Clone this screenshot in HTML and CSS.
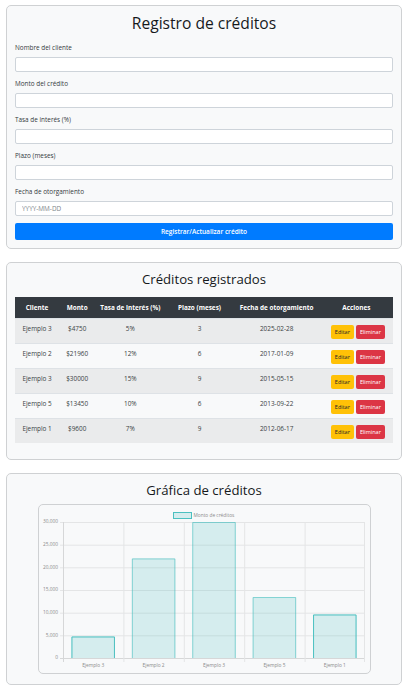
FILE: index.html
```html
<!DOCTYPE html>
<html lang="es">
<head>
<meta charset="utf-8">
<title>Registro de créditos</title>
<link rel="stylesheet" href="styles.css">
</head>
<body>
<main class="page">
  <section class="card">
    <h1 class="title title-lg">Registro de créditos</h1>
    <form class="form">
      <div class="field"><label class="label">Nombre del cliente</label><input class="input" type="text"></div>
      <div class="field"><label class="label">Monto del crédito</label><input class="input" type="text"></div>
      <div class="field"><label class="label">Tasa de interés (%)</label><input class="input" type="text"></div>
      <div class="field"><label class="label">Plazo (meses)</label><input class="input" type="text"></div>
      <div class="field"><label class="label">Fecha de otorgamiento</label><input class="input" type="text" placeholder="YYYY-MM-DD"></div>
      <button class="btn-primary" type="button">Registrar/Actualizar crédito</button>
    </form>
  </section>

  <section class="card">
    <h2 class="title title-md title-table">Créditos registrados</h2>
    <table class="table">
      <colgroup>
        <col class="c1"><col class="c2"><col class="c3"><col class="c4"><col class="c5"><col class="c6">
      </colgroup>
      <thead>
        <tr><th>Cliente</th><th>Monto</th><th>Tasa de interés (%)</th><th>Plazo (meses)</th><th>Fecha de otorgamiento</th><th>Acciones</th></tr>
      </thead>
      <tbody>
        <tr><td>Ejemplo 3</td><td>$4750</td><td>5%</td><td>3</td><td>2025-02-28</td><td><div class="actions"><button class="btn-sm btn-edit">Editar</button><button class="btn-sm btn-del">Eliminar</button></div></td></tr>
        <tr><td>Ejemplo 2</td><td>$21960</td><td>12%</td><td>6</td><td>2017-01-09</td><td><div class="actions"><button class="btn-sm btn-edit">Editar</button><button class="btn-sm btn-del">Eliminar</button></div></td></tr>
        <tr><td>Ejemplo 3</td><td>$30000</td><td>15%</td><td>9</td><td>2015-05-15</td><td><div class="actions"><button class="btn-sm btn-edit">Editar</button><button class="btn-sm btn-del">Eliminar</button></div></td></tr>
        <tr><td>Ejemplo 5</td><td>$13450</td><td>10%</td><td>6</td><td>2013-09-22</td><td><div class="actions"><button class="btn-sm btn-edit">Editar</button><button class="btn-sm btn-del">Eliminar</button></div></td></tr>
        <tr><td>Ejemplo 1</td><td>$9600</td><td>7%</td><td>9</td><td>2012-06-17</td><td><div class="actions"><button class="btn-sm btn-edit">Editar</button><button class="btn-sm btn-del">Eliminar</button></div></td></tr>
      </tbody>
    </table>
  </section>

  <section class="card">
    <h2 class="title title-md title-chart">Gráfica de créditos</h2>
    <div class="chart-box">
      <svg class="chart" width="331" height="168" viewBox="0 0 331 168" xmlns="http://www.w3.org/2000/svg">
        <g class="grid" stroke="#e4e5e6" stroke-width="1">
          <line x1="21" y1="17.5" x2="326" y2="17.5"/>
          <line x1="21" y1="40.2" x2="326" y2="40.2"/>
          <line x1="21" y1="62.8" x2="326" y2="62.8"/>
          <line x1="21" y1="85.5" x2="326" y2="85.5"/>
          <line x1="21" y1="108.2" x2="326" y2="108.2"/>
          <line x1="21" y1="130.8" x2="326" y2="130.8"/>
          <line x1="21" y1="153.5" x2="326" y2="153.5" stroke="#d6d7d8"/>
          <line x1="24.5" y1="17" x2="24.5" y2="157" stroke="#d6d7d8"/>
          <line x1="84.9" y1="17" x2="84.9" y2="157"/>
          <line x1="145.3" y1="17" x2="145.3" y2="157"/>
          <line x1="205.7" y1="17" x2="205.7" y2="157"/>
          <line x1="266.1" y1="17" x2="266.1" y2="157"/>
          <line x1="325.5" y1="17" x2="325.5" y2="157"/>
        </g>
        <g class="bars" fill="rgba(75,192,192,0.2)" stroke="rgb(75,192,192)" stroke-width="1">
          <rect x="32.45" y="131.47" width="43.5" height="21.53" stroke="none"/>
          <path d="M32.95 153 V131.97 H75.45 V153" fill="none"/>
          <rect x="92.85" y="53.45" width="43.5" height="99.55" stroke="none"/>
          <path d="M93.35 153 V53.95 H135.85 V153" fill="none" stroke-opacity="0.6"/>
          <rect x="153.25" y="17" width="43.5" height="136" stroke="none"/>
          <path d="M153.75 153 V17.5 H196.25 V153" fill="none" stroke-opacity="0.6"/>
          <rect x="213.65" y="92.03" width="43.5" height="60.97" stroke="none"/>
          <path d="M214.15 153 V92.53 H256.65 V153" fill="none" stroke-opacity="0.6"/>
          <rect x="274.05" y="109.48" width="43.5" height="43.52" stroke="none"/>
          <path d="M274.55 153 V109.98 H317.05 V153" fill="none"/>
        </g>
        <g class="axis-text" fill="#8a8a8a" font-size="4.8" font-family="Open Sans, sans-serif">
          <text x="19" y="17" text-anchor="end" dominant-baseline="middle">30,000</text>
          <text x="19" y="39.7" text-anchor="end" dominant-baseline="middle">25,000</text>
          <text x="19" y="62.3" text-anchor="end" dominant-baseline="middle">20,000</text>
          <text x="19" y="85" text-anchor="end" dominant-baseline="middle">15,000</text>
          <text x="19" y="107.7" text-anchor="end" dominant-baseline="middle">10,000</text>
          <text x="19" y="130.3" text-anchor="end" dominant-baseline="middle">5,000</text>
          <text x="19" y="153" text-anchor="end" dominant-baseline="middle">0</text>
          <text x="54.2" y="161" text-anchor="middle" dominant-baseline="middle">Ejemplo 3</text>
          <text x="114.6" y="161" text-anchor="middle" dominant-baseline="middle">Ejemplo 2</text>
          <text x="175" y="161" text-anchor="middle" dominant-baseline="middle">Ejemplo 3</text>
          <text x="235.4" y="161" text-anchor="middle" dominant-baseline="middle">Ejemplo 5</text>
          <text x="295.8" y="161" text-anchor="middle" dominant-baseline="middle">Ejemplo 1</text>
        </g>
        <g class="legend">
          <rect x="134.5" y="7.5" width="18" height="6" fill="rgba(75,192,192,0.2)" stroke="rgb(75,192,192)" stroke-width="1"/>
          <text x="154.5" y="10.5" fill="#8a8a8a" font-size="4.8" font-family="Open Sans, sans-serif" dominant-baseline="middle">Monto de créditos</text>
        </g>
      </svg>
    </div>
  </section>
</main>
</body>
</html>
```
FILE: styles.css
```css
* { box-sizing: border-box; }

body {
  margin: 0;
  background: #ffffff;
  color: #212529;
  font-family: "Open Sans", "Noto Sans", sans-serif;
}

.page {
  display: flex;
  flex-direction: column;
  gap: 13px;
  padding: 5px 8px 5px 6px;
}

.card {
  background: #f8f9fa;
  border: 1px solid #cfd1d3;
  border-radius: 5px;
  padding: 8px;
}

.title {
  margin: 0;
  text-align: center;
  font-weight: 500;
  color: #16191c;
}

.title-lg {
  font-size: 15.6px;
  line-height: 18px;
  margin-bottom: 11px;
}

.title-md {
  font-size: 13.2px;
  line-height: 16px;
}

.title-table { margin-bottom: 10px; }
.title-chart { margin-bottom: 6px; }

.form { display: block; margin: 0; }

.field { margin-bottom: 7px; }

.label {
  display: block;
  font-size: 6.4px;
  line-height: 10px;
  margin-bottom: 4px;
  color: #343a40;
}

.input {
  display: block;
  width: 100%;
  height: 15px;
  margin: 0;
  padding: 0 6px;
  border: 1px solid #ced4da;
  border-radius: 2px;
  background: #ffffff;
  font-family: "Open Sans", sans-serif;
  font-size: 6.4px;
  color: #495057;
}

.input::placeholder { color: #7d848a; }

.btn-primary {
  display: block;
  width: 100%;
  height: 17px;
  margin: 0;
  border: 0;
  border-radius: 2px;
  background: #007bff;
  color: #ffffff;
  font-family: "Open Sans", sans-serif;
  font-size: 6.5px;
  font-weight: 600;
}

.table {
  width: 100%;
  border-collapse: collapse;
  table-layout: fixed;
  margin-bottom: 8px;
  font-size: 6.4px;
  color: #3a3f44;
}

.c1 { width: 44px; }
.c2 { width: 36px; }
.c3 { width: 70px; }
.c4 { width: 68px; }
.c5 { width: 86px; }
.c6 { width: 73px; }

.table th {
  background: #343a40;
  color: #ffffff;
  font-weight: 700;
  font-size: 6.4px;
  line-height: 9px;
  padding: 6px 1px;
  text-align: center;
  white-space: nowrap;
}

.table td {
  padding: 6px 1px 4px;
  line-height: 8px;
  text-align: center;
  vertical-align: top;
  border-top: 1px solid #dee2e6;
  white-space: nowrap;
}

.table tbody tr:nth-child(odd) { background: rgba(0, 0, 0, 0.055); }

.actions {
  display: flex;
  justify-content: center;
  gap: 2px;
  padding-left: 3px;
}

.btn-sm {
  height: 14px;
  margin: 0;
  padding: 0 4px;
  border: 0;
  border-radius: 2px;
  font-family: "Open Sans", sans-serif;
  font-size: 5.5px;
  line-height: 14px;
}

.btn-edit { background: #ffc107; color: #212529; }
.btn-del { background: #dc3545; color: #ffffff; }

.chart-box {
  width: 333px;
  height: 170px;
  margin: 0 auto 2px;
  border: 1px solid #cfd1d3;
  border-radius: 5px;
}

.chart { display: block; }
```
